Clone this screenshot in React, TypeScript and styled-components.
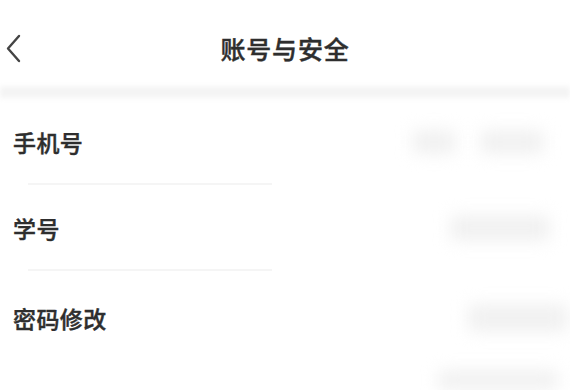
import React from "react";
import styled, { createGlobalStyle } from "styled-components";

const Global = createGlobalStyle`
  html, body { margin: 0; padding: 0; background: #ffffff; }
  body { font-family: "Noto Sans CJK SC", "Noto Sans", sans-serif; color: #333333; }
  * { box-sizing: border-box; }
`;

const Page = styled.div`
  width: 570px;
  height: 390px;
  overflow: hidden;
  display: flex;
  flex-direction: column;
  background: #ffffff;
`;

const Header = styled.div`
  flex-shrink: 0;
  height: 86px;
  display: grid;
  grid-template-columns: 60px 1fr 60px;
  align-items: center;
  padding: 10px 0 0;
`;

const Back = styled.button`
  border: 0;
  background: none;
  padding: 0 0 0 5px;
  display: flex;
  align-items: center;
  height: 40px;
`;

const Title = styled.h1`
  margin: 0;
  text-align: center;
  font-size: 25px;
  font-weight: 500;
  color: #2e2e2e;
  letter-spacing: 0.8px;
  -webkit-text-stroke: 0.4px #2e2e2e;
`;

const Band = styled.div`
  flex-shrink: 0;
  height: 13px;
  background: linear-gradient(#f7f7f7, #f3f3f3 50%, #f8f8f8);
  filter: blur(2px);
`;

const List = styled.div`
  flex-shrink: 0;
  display: flex;
  flex-direction: column;
`;

const Row = styled.div<{ $h: number }>`
  position: relative;
  flex-shrink: 0;
  height: ${(p) => p.$h}px;
  display: flex;
  align-items: center;
  justify-content: space-between;
  padding-left: 13px;
`;

const Divider = styled.div`
  position: absolute;
  left: 28px;
  width: 244px;
  bottom: 0;
  height: 2px;
  background: #f5f5f5;
`;

const Label = styled.span`
  font-size: 23px;
  font-weight: 500;
  color: #2e2e2e;
  letter-spacing: 0.4px;
  -webkit-text-stroke: 0.4px #2e2e2e;
`;

const Values = styled.div`
  display: flex;
  gap: 24px;
  align-items: center;
`;

const Blur = styled.div<{ $w: number; $h: number; $mr?: number }>`
  width: ${(p) => p.$w}px;
  height: ${(p) => p.$h}px;
  margin-right: ${(p) => p.$mr ?? 0}px;
  background: #f1f1f1;
  border-radius: 6px;
  filter: blur(8px);
`;

export default function App() {
  return (
    <Page>
      <Global />
      <Header>
        <Back aria-label="back">
          <svg width="18" height="30" viewBox="0 0 18 30">
            <path d="M14 3 L3 15.5 L14 28" fill="none" stroke="#444" strokeWidth="2.4" strokeLinecap="round" strokeLinejoin="round" />
          </svg>
        </Back>
        <Title>账号与安全</Title>
        <div />
      </Header>
      <Band />
      <List>
        <Row $h={86}>
          <Label>手机号</Label>
          <Values>
            <Blur $w={44} $h={24} />
            <Blur $w={64} $h={24} $mr={26} />
          </Values>
          <Divider />
        </Row>
        <Row $h={86}>
          <Label>学号</Label>
          <Values>
            <Blur $w={100} $h={26} $mr={20} />
          </Values>
          <Divider />
        </Row>
        <Row $h={94}>
          <Label>密码修改</Label>
          <Values>
            <Blur $w={100} $h={28} $mr={2} />
          </Values>
        </Row>
        <Row $h={30}>
          <span />
          <Values>
            <Blur $w={120} $h={20} $mr={12} />
          </Values>
        </Row>
      </List>
    </Page>
  );
}
